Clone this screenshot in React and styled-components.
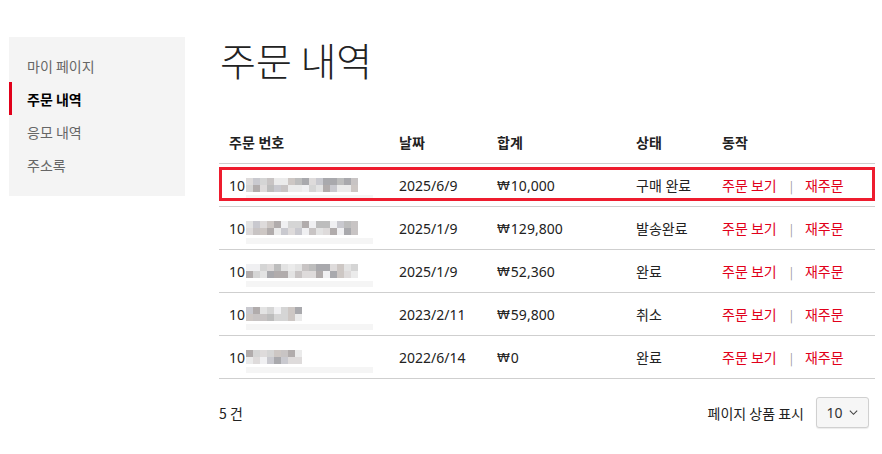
import React from "react";
import styled, { createGlobalStyle } from "styled-components";

const GlobalStyle = createGlobalStyle`
  body {
    margin: 0;
    background: #fff;
    font-family: "Noto Sans", "Noto Sans CJK KR", sans-serif;
    color: #222;
  }
`;

const Page = styled.div`
  display: flex;
  align-items: flex-start;
  gap: 34px;
  padding: 37px 8px 0 9px;
  width: 882px;
  height: 454px;
  box-sizing: border-box;
  overflow: hidden;
`;

const Sidebar = styled.nav`
  width: 176px;
  height: 159px;
  background: #f4f4f4;
  padding-top: 12px;
  box-sizing: border-box;
  flex-shrink: 0;
`;

const NavItem = styled.div`
  height: 33px;
  display: flex;
  align-items: center;
  padding-left: ${(p) => (p.active ? "15px" : "18px")};
  border-left: ${(p) => (p.active ? "3px solid #e1001a" : "none")};
  font-family: "Noto Sans CJK KR", sans-serif;
  font-size: 14px;
  font-weight: ${(p) => (p.active ? 700 : 400)};
  color: ${(p) => (p.active ? "#000" : "#666")};
`;

const Main = styled.main`
  width: 656px;
`;

const Title = styled.h1`
  margin: 0 0 0 1px;
  height: 83px;
  font-family: "Noto Sans CJK KR", sans-serif;
  font-weight: 300;
  font-size: 39px;
  line-height: 44px;
  color: #222;
`;

const Row = styled.div`
  position: relative;
  display: grid;
  grid-template-columns: 170px 98px 139px 86px 163px;
  align-items: center;
  height: ${(p) => (p.head ? "43px" : "42px")};
  border-bottom: 1px solid #cfcfcf;
  font-size: 14px;
  font-weight: ${(p) => (p.head ? 700 : 400)};
  color: #222;
  ${(p) =>
    p.highlighted &&
    `
    &::after {
      content: "";
      position: absolute;
      left: 0;
      right: 0;
      top: 3px;
      bottom: 5px;
      border: 3px solid #ee1c2e;
      pointer-events: none;
    }
  `}
`;

const Cell = styled.div`
  padding-left: 10px;
  font-family: "Noto Sans", "Noto Sans CJK KR", sans-serif;
  white-space: nowrap;
  display: flex;
  align-items: center;
`;

const Won = styled.span`
  font-family: "DejaVu Sans", "Noto Sans CJK KR", sans-serif;
  font-size: 13px;
  margin-right: 1px;
`;

const OrderNo = styled.div`
  position: relative;
  display: flex;
  align-items: center;
  height: 100%;
  &::after {
    content: "";
    position: absolute;
    left: 17px;
    width: 127px;
    bottom: -6px;
    height: 6px;
    background: #f5f5f5;
  }
`;

const Pixels = styled.div`
  display: grid;
  grid-template-columns: repeat(${(p) => p.cols}, 7px);
  grid-auto-rows: 7px;
  margin-left: 1px;
`;

const Pixel = styled.span`
  background: ${(p) => p.shade};
`;

const Links = styled.div`
  display: flex;
  align-items: center;
  padding-left: 10px;
  font-family: "Noto Sans CJK KR", sans-serif;
  font-size: 14px;
  font-weight: 400;
`;

const RedLink = styled.a`
  color: #e1001a;
  text-decoration: none;
`;

const Divider = styled.span`
  color: #999;
  font-size: 12px;
  margin: 0 12px 0 13px;
`;

const Footer = styled.div`
  display: flex;
  align-items: center;
  justify-content: space-between;
  margin-top: 18px;
  padding-right: 6px;
  font-family: "Noto Sans CJK KR", sans-serif;
  font-size: 14px;
  color: #222;
`;

const PerPage = styled.div`
  display: flex;
  align-items: center;
  gap: 12px;
`;

const Select = styled.div`
  width: 53px;
  height: 31px;
  box-sizing: border-box;
  border: 1px solid #d0d0d0;
  border-radius: 3px;
  background: #f6f6f6;
  display: flex;
  align-items: center;
  justify-content: center;
  gap: 5px;
  font-family: "Noto Sans", sans-serif;
  font-size: 14px;
  color: #333;
  box-shadow: 0 1px 1px rgba(0, 0, 0, 0.08);
`;

const palette = ["#e3e3e3", "#d5d5d5", "#c8c4c4", "#bdbdbd", "#b1acac", "#c9c9cf", "#dedbdb", "#ebebeb", "#a9a9ad", "#cdc7c4", "#f0f0f2"];

function makeShades(seed, count) {
  const out = [];
  let s = seed;
  for (let i = 0; i < count; i++) {
    s = (s * 9301 + 49297) % 233280;
    out.push(palette[s % palette.length]);
  }
  return out;
}

const orders = [
  { cols: 16, seed: 11, date: "2025/6/9", total: "10,000", status: "구매 완료", highlighted: true },
  { cols: 16, seed: 27, date: "2025/1/9", total: "129,800", status: "발송완료" },
  { cols: 16, seed: 53, date: "2025/1/9", total: "52,360", status: "완료" },
  { cols: 8, seed: 71, date: "2023/2/11", total: "59,800", status: "취소" },
  { cols: 8, seed: 97, date: "2022/6/14", total: "0", status: "완료" },
];

const ChevronDown = () => (
  <svg width="11" height="11" viewBox="0 0 12 12" fill="none">
    <path d="M2 4l4 4 4-4" stroke="#444" strokeWidth="1.2" />
  </svg>
);

export default function App() {
  return (
    <>
      <GlobalStyle />
      <Page>
        <Sidebar>
          <NavItem>마이 페이지</NavItem>
          <NavItem active>주문 내역</NavItem>
          <NavItem>응모 내역</NavItem>
          <NavItem>주소록</NavItem>
        </Sidebar>
        <Main>
          <Title>주문 내역</Title>
          <Row head>
            <Cell>주문 번호</Cell>
            <Cell>날짜</Cell>
            <Cell>합계</Cell>
            <Cell>상태</Cell>
            <Cell>동작</Cell>
          </Row>
          {orders.map((o, i) => (
            <Row key={i} highlighted={o.highlighted}>
              <Cell>
                <OrderNo>
                  10
                  <Pixels cols={o.cols}>
                    {makeShades(o.seed, o.cols * 2).map((shade, j) => (
                      <Pixel key={j} shade={shade} />
                    ))}
                  </Pixels>
                </OrderNo>
              </Cell>
              <Cell>{o.date}</Cell>
              <Cell>
                <Won>₩</Won>
                {o.total}
              </Cell>
              <Cell>{o.status}</Cell>
              <Links>
                <RedLink href="#">주문 보기</RedLink>
                <Divider>|</Divider>
                <RedLink href="#">재주문</RedLink>
              </Links>
            </Row>
          ))}
          <Footer>
            <span>5 건</span>
            <PerPage>
              <span>페이지 상품 표시</span>
              <Select>
                10
                <ChevronDown />
              </Select>
            </PerPage>
          </Footer>
        </Main>
      </Page>
    </>
  );
}
